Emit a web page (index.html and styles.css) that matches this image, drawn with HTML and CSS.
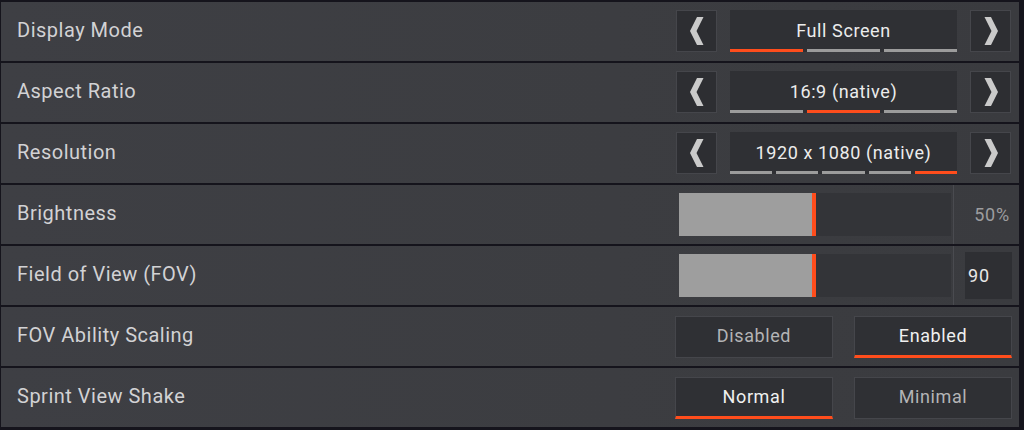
FILE: index.html
```html
<!DOCTYPE html>
<html>
<head>
<meta charset="utf-8">
<link rel="stylesheet" href="styles.css">
</head>
<body>
<div class="list">
  <div class="row">
    <div class="label">Display Mode</div>
    <div class="selector">
      <div class="arrow"><svg viewBox="0 0 14 28" width="14" height="28"><polygon points="7,0 13.5,0 6.5,14 13.5,28 7,28 0,14" fill="#cacaca"/></svg></div>
      <div class="value-box">
        <span class="value-text">Full Screen</span>
        <div class="segs"><i class="on"></i><i></i><i></i></div>
      </div>
      <div class="arrow"><svg viewBox="0 0 14 28" width="14" height="28"><polygon points="7,0 0.5,0 7.5,14 0.5,28 7,28 14,14" fill="#cacaca"/></svg></div>
    </div>
  </div>
  <div class="row">
    <div class="label">Aspect Ratio</div>
    <div class="selector">
      <div class="arrow"><svg viewBox="0 0 14 28" width="14" height="28"><polygon points="7,0 13.5,0 6.5,14 13.5,28 7,28 0,14" fill="#cacaca"/></svg></div>
      <div class="value-box">
        <span class="value-text">16:9 (native)</span>
        <div class="segs"><i></i><i class="on"></i><i></i></div>
      </div>
      <div class="arrow"><svg viewBox="0 0 14 28" width="14" height="28"><polygon points="7,0 0.5,0 7.5,14 0.5,28 7,28 14,14" fill="#cacaca"/></svg></div>
    </div>
  </div>
  <div class="row">
    <div class="label">Resolution</div>
    <div class="selector">
      <div class="arrow"><svg viewBox="0 0 14 28" width="14" height="28"><polygon points="7,0 13.5,0 6.5,14 13.5,28 7,28 0,14" fill="#cacaca"/></svg></div>
      <div class="value-box">
        <span class="value-text">1920 x 1080 (native)</span>
        <div class="segs"><i></i><i></i><i></i><i></i><i class="on"></i></div>
      </div>
      <div class="arrow"><svg viewBox="0 0 14 28" width="14" height="28"><polygon points="7,0 0.5,0 7.5,14 0.5,28 7,28 14,14" fill="#cacaca"/></svg></div>
    </div>
  </div>
  <div class="row">
    <div class="label">Brightness</div>
    <div class="slider-wrap">
      <div class="slider"><div class="fill" style="width:133px"></div><div class="handle"></div></div>
    </div>
    <div class="val-cell"><span class="pct">50%</span></div>
  </div>
  <div class="row">
    <div class="label">Field of View (FOV)</div>
    <div class="slider-wrap">
      <div class="slider"><div class="fill" style="width:133px"></div><div class="handle"></div></div>
    </div>
    <div class="val-cell"><span class="num-box">90</span></div>
  </div>
  <div class="row">
    <div class="label">FOV Ability Scaling</div>
    <div class="toggles">
      <div class="tbtn">Disabled</div>
      <div class="tbtn sel">Enabled</div>
    </div>
  </div>
  <div class="row">
    <div class="label">Sprint View Shake</div>
    <div class="toggles">
      <div class="tbtn sel">Normal</div>
      <div class="tbtn">Minimal</div>
    </div>
  </div>
</div>
</body>
</html>
```
FILE: styles.css
```css
html, body {
  margin: 0;
  padding: 0;
  background: #15141c;
  width: 1024px;
  height: 430px;
  overflow: hidden;
}
body {
  font-family: Roboto, "Liberation Sans", sans-serif;
}
.list {
  display: flex;
  flex-direction: column;
  gap: 2px;
  padding: 2px 5px 0 1px;
}
.row {
  height: 59px;
  display: flex;
  align-items: center;
  background: linear-gradient(90deg, #3e3f44 0%, #3c3d41 60%, #3a3b3f 100%);
}
.label {
  flex: 1;
  padding-left: 16px;
  font-size: 20px;
  letter-spacing: 0.5px;
  color: #d2d2d4;
  padding-bottom: 4px;
}
.selector {
  display: flex;
  gap: 13px;
  margin-right: 8px;
  height: 42px;
  margin-top: -1px;
}
.arrow {
  width: 39px;
  height: 40px;
  background: #2d2e32;
  border: 1px solid #45464b;
  display: flex;
  align-items: center;
  justify-content: center;
}
.value-box {
  width: 227px;
  height: 42px;
  background: #2f3034;
  position: relative;
  display: flex;
  justify-content: center;
  align-items: center;
}
.value-text {
  font-size: 18px;
  letter-spacing: 0.6px;
  color: #ececec;
  padding-bottom: 1px;
}
.segs {
  position: absolute;
  left: 0;
  right: 0;
  bottom: 0;
  display: flex;
  gap: 4px;
  height: 3px;
}
.segs i {
  flex: 1;
  background: #9c9c9c;
}
.segs i.on {
  background: #ff4d1c;
}
.slider-wrap {
  display: flex;
  align-items: center;
  margin-right: 2px;
  height: 59px;
}
.slider {
  width: 272px;
  height: 43px;
  background: #333438;
  display: flex;
}
.fill {
  background: #9e9e9e;
  height: 100%;
}
.handle {
  width: 4px;
  background: #ff4d1c;
  height: 100%;
}
.val-cell {
  width: 66px;
  height: 59px;
  border-left: 1px solid #4a4b50;
  box-sizing: border-box;
  display: flex;
  align-items: center;
  justify-content: flex-end;
}
.pct {
  font-size: 18px;
  letter-spacing: 0.8px;
  color: #9d9d9f;
  padding-right: 9px;
}
.num-box {
  width: 47px;
  height: 47px;
  background: #2e2f33;
  margin-right: 7px;
  box-sizing: border-box;
  padding-left: 3px;
  display: flex;
  align-items: center;
  font-size: 18px;
  letter-spacing: 1px;
  color: #e8e8e8;
}
.toggles {
  display: flex;
  gap: 21px;
  margin-right: 7px;
}
.tbtn {
  width: 158px;
  height: 42px;
  box-sizing: border-box;
  background: #2f3034;
  border: 1px solid #45464b;
  display: flex;
  align-items: center;
  justify-content: center;
  font-size: 18px;
  letter-spacing: 0.6px;
  color: #b4b4b6;
  padding-bottom: 2px;
}
.tbtn.sel {
  color: #f0f0f0;
  border-bottom: 3px solid #ff4d1c;
  padding-bottom: 0;
}
```
